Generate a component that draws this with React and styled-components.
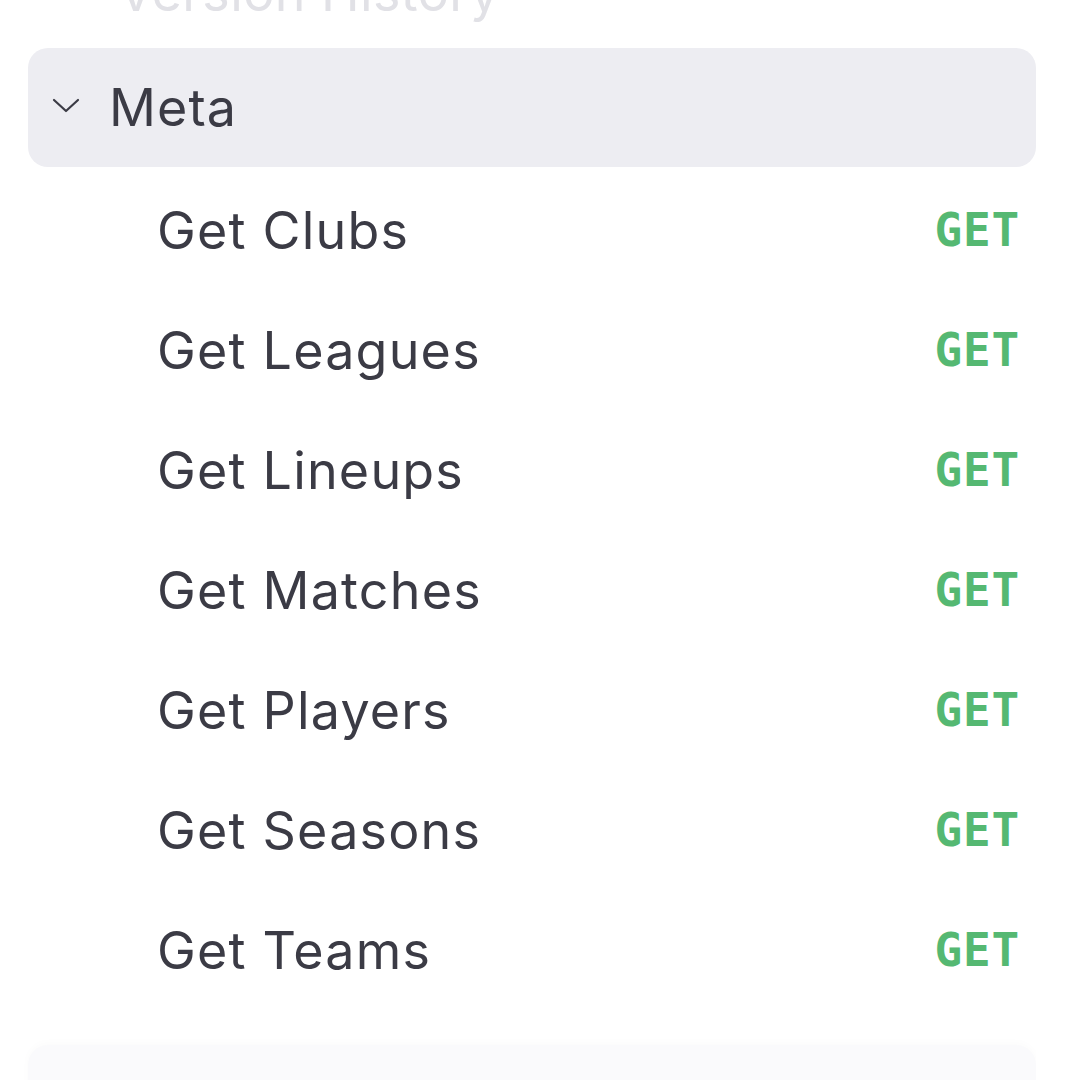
import React, {useState} from 'react';
import styled, {createGlobalStyle} from 'styled-components';

const GlobalStyle = createGlobalStyle`
  html, body {
    margin: 0;
    padding: 0;
    background: #ffffff;
    overflow: hidden;
  }
  body {
    font-family: Inter, "Noto Sans", "Liberation Sans", sans-serif;
  }
`;

const Sidebar = styled.nav`
  width: 1008px;
  height: 1080px;
  padding-left: 28px;
  overflow: hidden;
`;

const FadedTitle = styled.div`
  margin-top: -31px;
  padding-left: 90px;
  height: 48px;
  font-size: 52px;
  line-height: 48px;
  letter-spacing: 0.4px;
  color: #e1e1e6;
  white-space: nowrap;
`;

const GroupHeader = styled.button`
  display: flex;
  align-items: center;
  width: 100%;
  height: 119px;
  margin-top: 31px;
  padding: 0 0 0 24px;
  border: none;
  border-radius: 20px;
  background: ${(props) => (props.active ? '#ededf2' : 'transparent')};
  font-family: inherit;
  cursor: pointer;
`;

const Chevron = styled.svg`
  width: 28px;
  height: 28px;
  margin-top: -8px;
  color: #3b3b45;
  transform: rotate(${(props) => (props.open ? '0deg' : '-90deg')});
`;

const GroupName = styled.span`
  margin-left: 29px;
  font-size: 52px;
  color: #3b3b45;
  letter-spacing: 1.1px;
`;

const List = styled.ul`
  list-style: none;
  margin: 3px 0 0;
  padding: 0;
`;

const Item = styled.li`
  display: flex;
  align-items: center;
  justify-content: space-between;
  height: 120px;
  padding: 0 16px 0 129px;
`;

const ItemName = styled.span`
  font-size: 52px;
  color: #3b3b45;
  letter-spacing: 1.2px;
`;

const Method = styled.span`
  font-family: "DejaVu Sans Mono", "Liberation Mono", monospace;
  font-weight: bold;
  font-size: 46px;
  color: #55b872;
  letter-spacing: 0.8px;
`;

const NextGroup = styled.div`
  height: 120px;
  margin-top: 35px;
  border-radius: 20px;
  background: #fafafc;
  box-shadow: 0 -2px 8px rgba(0, 0, 0, 0.02);
`;

const endpoints = [
  'Get Clubs',
  'Get Leagues',
  'Get Lineups',
  'Get Matches',
  'Get Players',
  'Get Seasons',
  'Get Teams',
];

function App() {
  const [open, setOpen] = useState(true);

  return (
    <>
      <GlobalStyle />
      <Sidebar>
        <FadedTitle>Version History</FadedTitle>
        <GroupHeader active onClick={() => setOpen(!open)}>
          <Chevron open={open} viewBox="0 0 28 28" fill="none">
            <path d="M2 10 L14 21 L26 10" stroke="currentColor" strokeWidth="2.2" strokeLinecap="round" strokeLinejoin="round" />
          </Chevron>
          <GroupName>Meta</GroupName>
        </GroupHeader>
        {open && (
          <List>
            {endpoints.map((name) => (
              <Item key={name}>
                <ItemName>{name}</ItemName>
                <Method>GET</Method>
              </Item>
            ))}
          </List>
        )}
        <NextGroup />
      </Sidebar>
    </>
  );
}

export default App;
